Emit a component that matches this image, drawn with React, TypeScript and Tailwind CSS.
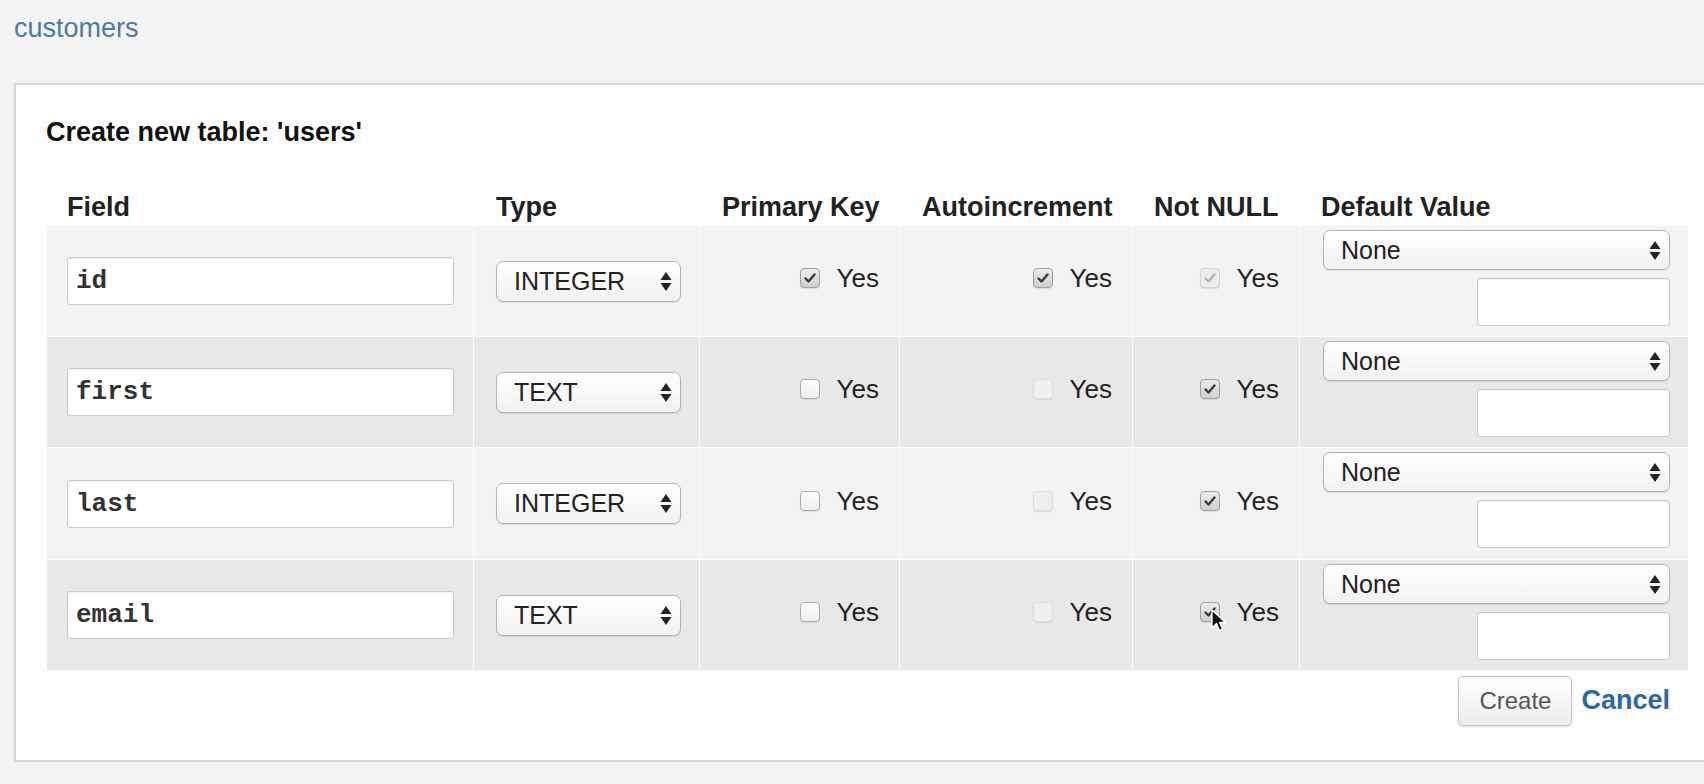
import React from "react";

type CheckProps = { checked: boolean; disabled?: boolean };

function Check({ checked, disabled }: CheckProps) {
  let box = "";
  let stroke = "#3a3a3a";
  if (disabled && checked) {
    box = "border-[#d2d2d2] bg-[#ececec]";
    stroke = "#b4b4b4";
  } else if (disabled) {
    box = "border-[#dedede] bg-[#efefef]";
  } else if (checked) {
    box = "border-[#a0a0a0] bg-gradient-to-b from-[#ececec] to-[#cfcfcf]";
  } else {
    box = "border-[#ababab] bg-gradient-to-b from-[#ffffff] to-[#ededed]";
  }
  return (
    <div className={"w-[20px] h-[20px] rounded-[4px] border flex items-center justify-center shadow-[0_1px_1px_rgba(0,0,0,0.08)] " + box}>
      {checked && (
        <svg width="16" height="16" viewBox="0 0 16 16">
          <path d="M3.5 8.5 L6.5 11.5 L12.5 4.5" fill="none" stroke={stroke} strokeWidth="2.4" strokeLinecap="round" strokeLinejoin="round" />
        </svg>
      )}
    </div>
  );
}

function Arrows() {
  return (
    <svg width="12" height="21" viewBox="0 0 12 21">
      <path d="M6 1 L11.5 9 L0.5 9 Z" fill="#222" />
      <path d="M6 20 L11.5 12 L0.5 12 Z" fill="#222" />
    </svg>
  );
}

function SelectBox({ value, className }: { value: string; className: string }) {
  return (
    <div
      className={
        "flex items-center justify-between border border-[#b4b4b4] rounded-[7px] bg-gradient-to-b from-[#ffffff] to-[#f1f1f1] shadow-[0_1px_1px_rgba(0,0,0,0.1)] pl-[17px] pr-[8px] text-[25px] leading-[25px] text-[#222] " +
        className
      }
    >
      <span>{value}</span>
      <Arrows />
    </div>
  );
}

function CheckCell({ checked, disabled }: CheckProps) {
  return (
    <div className="flex items-center justify-end gap-[17px] pr-[20px] pb-[6px]">
      <Check checked={checked} disabled={disabled} />
      <span className="text-[26px] leading-[26px] text-[#222]">Yes</span>
    </div>
  );
}

const rows = [
  { name: "id", type: "INTEGER", pk: true, ai: true, aiDis: false, nn: true, nnDis: true, h: "h-[110px]" },
  { name: "first", type: "TEXT", pk: false, ai: false, aiDis: true, nn: true, nnDis: false, h: "h-[110px]" },
  { name: "last", type: "INTEGER", pk: false, ai: false, aiDis: true, nn: true, nnDis: false, h: "h-[111px]" },
  { name: "email", type: "TEXT", pk: false, ai: false, aiDis: true, nn: true, nnDis: false, h: "h-[110px]" },
];

export default function App() {
  return (
    <div className="relative w-[1704px] h-[784px] overflow-hidden bg-[#f4f4f4] font-['Liberation_Sans',Arial,sans-serif] text-[#222]">
      <div className="pt-[15px] pl-[14px] text-[27px] leading-[27px] text-[#4b7ba4]">customers</div>
      <div className="mt-[41px] ml-[14px] mr-[-20px] h-[679px] bg-[#fdfdfd] border-2 border-[#d8d8d8] pl-[30px] pt-[34px]">
        <div className="text-[27px] leading-[27px] font-bold text-[#111]">Create new table: 'users'</div>
        <div className="mt-[48px] ml-[1px] w-[1641px]">
          <div className="grid grid-cols-[426px_225px_199px_232px_166px_388px] gap-px">
            <div className="h-[31px] pl-[20px] text-[27px] leading-[27px] font-bold">Field</div>
            <div className="h-[31px] pl-[22px] text-[27px] leading-[27px] font-bold">Type</div>
            <div className="h-[31px] pl-[22px] text-[27px] leading-[27px] font-bold">Primary Key</div>
            <div className="h-[31px] pl-[22px] text-[27px] leading-[27px] font-bold">Autoincrement</div>
            <div className="h-[31px] pl-[21px] text-[27px] leading-[27px] font-bold">Not NULL</div>
            <div className="h-[31px] pl-[21px] text-[27px] leading-[27px] font-bold">Default Value</div>
            {rows.map((r, i) => {
              const bg = (i % 2 === 0 ? "bg-[#f3f3f3] " : "bg-[#e8e8e8] ") + r.h;
              return (
                <React.Fragment key={r.name}>
                  <div className={"flex items-center pl-[20px] " + bg}>
                    <div className="w-[387px] h-[48px] flex items-center pl-[8px] bg-white border border-[#cacaca] rounded-[3px] shadow-[inset_0_1px_1px_rgba(0,0,0,0.06)] font-['Liberation_Mono','Courier_New',monospace] text-[26px] leading-[26px] text-[#333] font-bold">
                      {r.name}
                    </div>
                  </div>
                  <div className={"flex items-center pl-[22px] " + bg}>
                    <SelectBox value={r.type} className="w-[185px] h-[41px]" />
                  </div>
                  <div className={"flex justify-end " + bg}>
                    <CheckCell checked={r.pk} />
                  </div>
                  <div className={"flex justify-end " + bg}>
                    <CheckCell checked={r.ai} disabled={r.aiDis} />
                  </div>
                  <div className={"flex justify-end " + bg}>
                    <CheckCell checked={r.nn} disabled={r.nnDis} />
                  </div>
                  <div className={"flex flex-col items-end pt-[4px] pr-[18px] gap-[8px] " + bg}>
                    <SelectBox value="None" className="w-[347px] h-[40px]" />
                    <div className="w-[193px] h-[48px] bg-white border border-[#cacaca] rounded-[3px] shadow-[inset_0_1px_1px_rgba(0,0,0,0.06)]" />
                  </div>
                </React.Fragment>
              );
            })}
          </div>
          <div className="mt-[6px] flex justify-end items-start pr-[18px]">
            <div className="w-[114px] h-[50px] flex items-center justify-center border border-[#c4c4c4] rounded-[5px] bg-gradient-to-b from-[#ffffff] to-[#ececec] shadow-[0_1px_2px_rgba(0,0,0,0.12)] text-[24px] leading-[24px] text-[#555]">
              Create
            </div>
            <div className="ml-[9px] mt-[11px] text-[27px] leading-[27px] font-bold text-[#2e6aa1]">Cancel</div>
          </div>
        </div>
      </div>
      <svg className="absolute left-[1211px] top-[609px]" width="16" height="24" viewBox="0 0 16 24">
        <path d="M1 1 L1 19 L5.5 14.5 L8.5 21.5 L11.5 20 L8.5 13.5 L14.5 13.5 Z" fill="#111" stroke="#fff" strokeWidth="1.3" strokeLinejoin="round" />
      </svg>
    </div>
  );
}
